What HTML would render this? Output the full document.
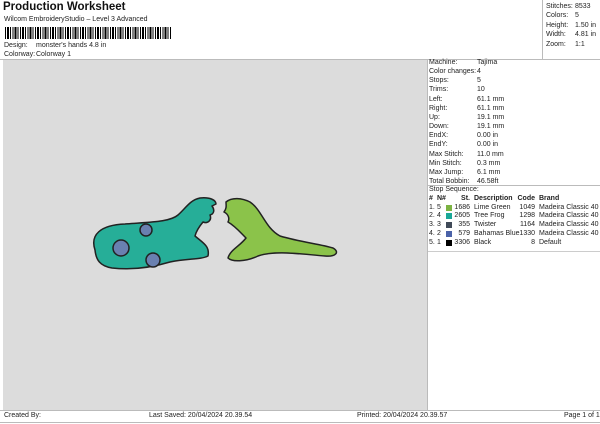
<!DOCTYPE html>
<html><head><style>
body{margin:0;width:600px;height:424px;background:#fff;font-family:"Liberation Sans",sans-serif;font-size:7px;color:#222;position:relative;overflow:hidden}
.a{position:absolute;white-space:nowrap}
.r{position:absolute;left:0;width:600px;height:9px}
.r span{position:absolute;top:0;white-space:nowrap}
.sw{position:absolute;left:446px;top:1px;width:6px;height:6px}
</style></head><body>
<div class="a" style="left:3px;top:1px;font-size:11.5px;font-weight:bold;color:#111">Production Worksheet</div>
<div class="a" style="left:4px;top:16px">Wilcom EmbroideryStudio – Level 3 Advanced</div>
<div class="a" style="left:5px;top:27px;width:166px;height:12px;background:repeating-linear-gradient(90deg,#000 0 1px,#fff 1px 2px,#000 2px 4px,#fff 4px 5px,#000 5px 6px,#fff 6px 7.5px)"></div>
<div class="a" style="left:4px;top:42px">Design:</div><div class="a" style="left:36px;top:42px">monster's hands 4.8 in</div>
<div class="a" style="left:4px;top:51px">Colorway:</div><div class="a" style="left:36px;top:51px">Colorway 1</div>
<div class="a" style="left:0;top:59px;width:600px;border-top:1px solid #bbb"></div>
<div class="a" style="left:542px;top:0;height:59px;border-left:1px solid #bbb"></div>
<div class="a" style="left:546px;top:2px;line-height:9.4px">Stitches:<br>Colors:<br>Height:<br>Width:<br>Zoom:</div>
<div class="a" style="left:575px;top:2px;line-height:9.4px">8533<br>5<br>1.50 in<br>4.81 in<br>1:1</div>
<div class="a" style="left:3px;top:60px;width:424px;height:350px;background:#dcdcdc"></div>
<div class="a" style="left:427px;top:60px;height:350px;border-left:1px solid #bbb"></div>
<div class="a" style="left:429px;top:58px;line-height:9.15px">Machine:<br>Color changes:<br>Stops:<br>Trims:<br>Left:<br>Right:<br>Up:<br>Down:<br>EndX:<br>EndY:<br>Max Stitch:<br>Min Stitch:<br>Max Jump:<br>Total Bobbin:</div>
<div class="a" style="left:477px;top:58px;line-height:9.15px">Tajima<br>4<br>5<br>10<br>61.1 mm<br>61.1 mm<br>19.1 mm<br>19.1 mm<br>0.00 in<br>0.00 in<br>11.0 mm<br>0.3 mm<br>6.1 mm<br>46.58ft</div>
<div class="a" style="left:428px;top:185px;width:172px;border-top:1px solid #bbb"></div>
<div class="a" style="left:429px;top:186px">Stop Sequence:</div>
<div class="r" style="top:195px;font-weight:bold;text-decoration:underline"><span style="left:429px">#</span><span style="left:437px">N#</span><span style="left:458px;width:12px;text-align:right">St.</span><span style="left:474px">Description</span><span style="left:515px;width:20px;text-align:right">Code</span><span style="left:539px">Brand</span></div>
<div class="r" style="top:203.7px"><span style="left:429px">1.</span><span style="left:437px">5</span><i class="sw" style="background:#7cb342"></i><span style="left:450px;width:20px;text-align:right">1686</span><span style="left:474px">Lime Green</span><span style="left:515px;width:20px;text-align:right">1049</span><span style="left:539px">Madeira Classic 40</span></div>
<div class="r" style="top:212.4px"><span style="left:429px">2.</span><span style="left:437px">4</span><i class="sw" style="background:#1aa898"></i><span style="left:450px;width:20px;text-align:right">2605</span><span style="left:474px">Tree Frog</span><span style="left:515px;width:20px;text-align:right">1298</span><span style="left:539px">Madeira Classic 40</span></div>
<div class="r" style="top:221.1px"><span style="left:429px">3.</span><span style="left:437px">3</span><i class="sw" style="background:#404a58"></i><span style="left:450px;width:20px;text-align:right">355</span><span style="left:474px">Twister</span><span style="left:515px;width:20px;text-align:right">1164</span><span style="left:539px">Madeira Classic 40</span></div>
<div class="r" style="top:229.8px"><span style="left:429px">4.</span><span style="left:437px">2</span><i class="sw" style="background:#4a62a8"></i><span style="left:450px;width:20px;text-align:right">579</span><span style="left:474px">Bahamas Blue</span><span style="left:515px;width:20px;text-align:right">1330</span><span style="left:539px">Madeira Classic 40</span></div>
<div class="r" style="top:238.5px"><span style="left:429px">5.</span><span style="left:437px">1</span><i class="sw" style="background:#000"></i><span style="left:450px;width:20px;text-align:right">3306</span><span style="left:474px">Black</span><span style="left:515px;width:20px;text-align:right">8</span><span style="left:539px">Default</span></div>
<div class="a" style="left:428px;top:251px;width:172px;border-top:1px solid #ccc"></div>
<svg class="a" style="left:0;top:0" width="600" height="424">
<g stroke="#222" stroke-width="1.5" stroke-linejoin="round">
<path d="M95,250 C90,235 100,225 125,224 C150,222 170,222 178,215 C186,208 190,200 200,198 C210,197 216,200 216,204 L212,206 C215,210 214,214 210,215 C212,220 208,224 203,222 C198,228 196,232 195,236 C203,243 210,246 208,256 C200,260 188,258 170,262 C150,268 130,270 112,268 C100,266 96,260 95,250 Z" fill="#26ae98"/>
<circle cx="121" cy="248" r="8" fill="#6a80b0"/>
<circle cx="146" cy="230" r="6" fill="#6a80b0"/>
<circle cx="153" cy="260" r="7" fill="#6a80b0"/>
<path d="M226,202 C232,197 242,198 250,202 C262,210 265,228 280,236 C300,242 320,244 333,248 C340,252 336,257 325,256 C300,254 275,250 258,256 C245,262 232,262 228,258 C230,250 240,246 246,238 C240,232 235,226 228,222 C230,218 228,214 224,212 C227,208 226,205 226,202 Z" fill="#8bc34a"/>
</g>
</svg>
<div class="a" style="left:0;top:410px;width:600px;border-top:1px solid #bbb"></div>
<div class="a" style="left:0;top:422px;width:600px;border-top:1px solid #bbb"></div>
<div class="a" style="left:4px;top:412px">Created By:</div>
<div class="a" style="left:149px;top:412px">Last Saved: 20/04/2024 20.39.54</div>
<div class="a" style="left:357px;top:412px">Printed: 20/04/2024 20.39.57</div>
<div class="a" style="left:564px;top:412px">Page 1 of 1</div>
</body></html>
